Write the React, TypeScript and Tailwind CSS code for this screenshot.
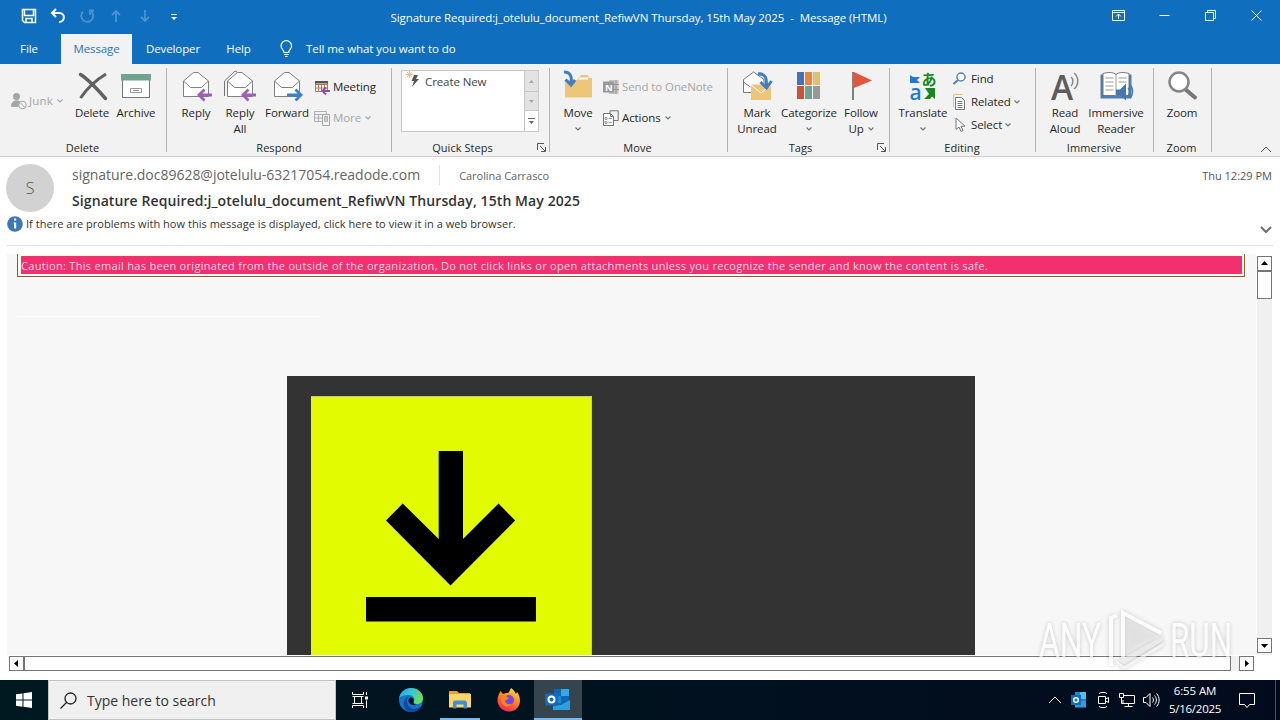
import type { ReactNode } from "react";

export default function App() {
  return (
    <div className="relative w-[1280px] h-[720px] flex flex-col overflow-hidden bg-white font-['Open_Sans',sans-serif] text-[11.5px] tracking-[-0.1px] text-[#262626] whitespace-nowrap">
      <TitleBar />
      <TabBar />
      <Ribbon />
      <MessageHeader />
      <MessageBody />
      <Taskbar />
      <Watermark />
    </div>
  );
}

function TitleBar() {
  return (
    <div className="h-[34px] shrink-0 bg-[#106ebe] text-white flex">
      <div className="w-[184px] h-8 pl-[14px] flex items-center">
        <QuickIcon>
          <path d="M1.500 1.500h13v13h-11l-2-2z M3.500 2v5.500h9V2 M5 14.500v-4h6v4" strokeWidth="1.500" />
        </QuickIcon>
        <QuickIcon>
          <path d="M6 1 2 5l4 4 M2 5h7c7 0 6 9 0 9" strokeWidth="2" />
        </QuickIcon>
        <QuickIcon dim>
          <path d="M4 3.500a6 6 0 1 0 7-1 M11 7V2.500h4" strokeWidth="1.800" />
        </QuickIcon>
        <QuickIcon dim>
          <path d="M8 14V3 M4 7l4-4 4 4" strokeWidth="1.800" />
        </QuickIcon>
        <QuickIcon dim>
          <path d="M8 2v11 M4 9l4 4 4-4" strokeWidth="1.800" />
        </QuickIcon>
        <QuickIcon>
          <path d="M5 6.500h6" strokeWidth="1" />
          <path d="M5 9h6l-3 3z" fill="white" stroke="none" />
        </QuickIcon>
      </div>
      <div className="flex-1 h-[35px] pr-[2px] flex items-center justify-center whitespace-pre tracking-[-0.07px]">
        Signature Required:j_otelulu_document_RefiwVN Thursday, 15th May 2025  -  Message (HTML)
      </div>
      <div className="flex h-[30px] pr-px">
        <WindowIcon>
          <path d="M1.500 2.500h12v10h-12z M1.500 4.500h12 M7.500 11V6.500 M5 8.500l2.500-2.500 2.500 2.500" />
        </WindowIcon>
        <WindowIcon>
          <path d="M2.500 7.500h10" />
        </WindowIcon>
        <WindowIcon>
          <path d="M2.500 4.500h8v8h-8z M4.500 4.500v-2h8v8h-2" />
        </WindowIcon>
        <WindowIcon>
          <path d="M2.500 2.500l10 10 M12.500 2.500l-10 10" />
        </WindowIcon>
      </div>
    </div>
  );
}

function QuickIcon(props: { dim?: boolean; children: ReactNode }) {
  return (
    <div className="w-[29px] shrink-0 flex justify-center">
      <svg className={props.dim ? "opacity-25" : ""} width="16" height="16" fill="none" stroke="white">
        {props.children}
      </svg>
    </div>
  );
}

function WindowIcon(props: { children: ReactNode }) {
  return (
    <div className="w-[46px] flex justify-center items-center">
      <svg width="15" height="15" fill="none" stroke="white">
        {props.children}
      </svg>
    </div>
  );
}

function TabBar() {
  return (
    <div className="h-[30px] shrink-0 bg-[#106ebe] text-white flex items-center">
      <div className="w-[61px] pr-[3px] text-center">File</div>
      <div className="w-[71px] h-full bg-[#f2f2f2] text-[#2a72b8] flex items-center justify-center">Message</div>
      <div className="w-[82px] text-center">Developer</div>
      <div className="w-[49px] text-center">Help</div>
      <svg className="ml-[15px]" width="16" height="18" fill="none" stroke="white" strokeWidth="1.2">
        <path d="M6 12.500c0-2.500-3-3.500-3-6.500a5.300 5.300 0 0 1 10.600 0c0 3-3 4-3 6.500z M6 14.500h4.600 M7 16.500h2.600" />
      </svg>
      <div className="ml-3 tracking-[-0.06px]">Tell me what you want to do</div>
    </div>
  );
}

function Ribbon() {
  return (
    <div className="h-[93px] shrink-0 bg-[#f2f2f2] border-b border-[#cfcfcf] flex">
      <Group label="Delete" className="w-[167px] pl-[10px]" labelClass="-ml-[12px]">
        <div className="w-[60px] h-[62px] flex items-center text-[#a6a6a6]">
          <svg width="18" height="18" fill="#a6a6a6">
            <circle cx="6.500" cy="4.500" r="3.500" />
            <path d="M1 15c0-8 9-8 10-4l-3 4z" />
            <circle cx="12.500" cy="13" r="3.800" fill="#f2f2f2" stroke="#a6a6a6" />
            <path d="M10 10.500l5 5" stroke="#a6a6a6" />
          </svg>
          <span className="ml-px tracking-[0.2px]">Junk</span>
          <Caret className="ml-[4px] opacity-60" />
        </div>
        <BigButton className="w-11" label="Delete">
          <path d="M4.500 4.500c8 5 18 16 25 24" stroke="#606060" strokeWidth="3.500" strokeLinecap="round" fill="none" />
          <path d="M30 4C20 10 10 20 4.500 28" stroke="#606060" strokeWidth="3" fill="none" />
        </BigButton>
        <BigButton className="w-11" label="Archive">
          <path d="M2.500 10v17.500h27V10" fill="white" stroke="#767676" />
          <path d="M1 4h30v6.500H1z" fill="#6fa390" />
          <path d="M10.500 18.500h11v4h-11z M13 20.500h6" fill="none" stroke="#999" />
        </BigButton>
      </Group>

      <Group label="Respond" className="w-[225px] pl-[7px]">
        <BigButton className="w-11" label="Reply">
          <Envelope />
          <path d="M32 25H19 M24.500 19.500 19 25l5.500 5.500" fill="none" stroke="#9b5fb5" strokeWidth="2.800" />
        </BigButton>
        <BigButton className="w-11" label={"Reply\nAll"}>
          <path d="M.5 26V11L11 1l2 1" fill="none" stroke="#767676" />
          <Envelope />
          <path d="M32 25H19 M24.500 19.500 19 25l5.500 5.500" fill="none" stroke="#9b5fb5" strokeWidth="2.800" />
        </BigButton>
        <BigButton className="w-[50px]" label="Forward">
          <Envelope />
          <path d="M16 25h14 M24.500 19.500 30 25l-5.500 5.500" fill="none" stroke="#3f7fc4" strokeWidth="2.800" />
        </BigButton>
        <div className="pt-[7px] pl-[2px] flex flex-col gap-[11px]">
          <SmallButton label="Meeting" gap="gap-[3px]">
            <path d="M1.500 2.500h12v10h-12z M1.500 5.500h12 M4.500 5.500v7 M7.500 5.500v7 M10.500 5.500v7 M1.500 9h12" fill="white" stroke="#b5764a" />
            <path d="M1 2h13v2.500H1z" fill="#555" />
            <path d="M16 12H9 M12 8.500 8.500 12l3.500 3.500" fill="none" stroke="#8f4fae" strokeWidth="2" />
          </SmallButton>
          <SmallButton label="More" gap="gap-[3px]" disabled caret>
            <path d="M.5 1.500h12v10H.5z M.5 4.500h12 M4.500 4.500v7 M.5 8h12" fill="none" stroke="#b0b0b0" />
            <path d="M8.500 4.500h7v11h-7z" fill="#f2f2f2" stroke="#a6a6a6" />
            <path d="M10.500 6.500h3v5h-3z" fill="#ccc" stroke="#b0b0b0" />
          </SmallButton>
        </div>
      </Group>

      <Group label="Quick Steps" className="w-[158px] pl-[9px]" labelClass="-ml-[26px]" launcher>
        <div className="w-[138px] h-[62px] bg-white border border-[#c8c8c8] flex">
          <div className="flex-1 pl-1 flex items-start text-[#444]">
            <svg width="16" height="18" fill="none">
              <path d="M3.500 0v7 M0 3.500h7 M1 1l5 5 M6 1 1 6" stroke="#eebf7c" />
              <path d="M8 4h4l-2 4h3l-7 8 2-6H5.500z" fill="#555" />
            </svg>
            <span className="ml-[3px] mt-[2px]">Create New</span>
          </div>
          <div className="w-[14px] border-l border-[#c8c8c8] flex flex-col">
            <div className="h-[20px] bg-[#e3e3e3] flex items-center justify-center">
              <svg width="5" height="3" fill="#a6a6a6"><path d="M0 3 2.500 0 5 3z" /></svg>
            </div>
            <div className="h-[20px] bg-[#e3e3e3] border-y border-[#c8c8c8] flex items-center justify-center">
              <svg width="5" height="3" fill="#a6a6a6"><path d="M0 0h5L2.500 3z" /></svg>
            </div>
            <div className="flex-1 flex items-center justify-center">
              <svg width="7" height="7" fill="#666"><path d="M0 0h7v1H0z M1 3h5L3.500 6z" /></svg>
            </div>
          </div>
        </div>
      </Group>

      <Group label="Move" className="w-[178px] pl-[5px]">
        <BigButton className="w-[46px]" label="Move" caret>
          <path d="M3 10h12l4-5h7l1 3h3v19.500H3z" fill="#eec67a" />
          <path d="M18 7.500h8v2H16z" fill="white" />
          <path d="M2 2c7 0 8 5 7 12 M3.500 9.500l5.500 5.500 4-5" fill="none" stroke="#3f7fc4" strokeWidth="3" />
        </BigButton>
        <div className="pt-[7px] pl-[2px] flex flex-col gap-[11px]">
          <SmallButton label="Send to OneNote" gap="gap-[3px]" disabled>
            <path d="M6 1h9.500v14H6z" fill="#c4c4c4" />
            <path d="M13 1v14 M11 5.500h5 M11 10.500h5" stroke="#999" />
            <path d="M0 2.500h11v11H0z" fill="#999" />
            <text x="2" y="11.500" fontSize="9.500" fontWeight="700" fill="white">N</text>
          </SmallButton>
          <SmallButton label="Actions" gap="gap-[3px]" caret>
            <path d="M7 3.500V.8h8.200v9.700H11" fill="none" stroke="#767676" />
            <path d="M.5 3.500h7l3 3v9h-10z M7.500 3.500v3h3" fill="white" stroke="#767676" />
            <path d="M2 7.500h2v2H2z M2 11.500h2v2H2z M5.500 8.500h3.500 M5.500 12.500h3.500" fill="none" stroke="#999" />
          </SmallButton>
        </div>
      </Group>

      <Group label="Tags" className="w-[162px] pl-[7px]" labelClass="-ml-[24px]" launcher>
        <BigButton className="w-11" label={"Mark\nUnread"}>
          <path d="M2.500 22.500V9.500L12.500 2 23 9.500v13z M2.500 12l7 5" fill="white" stroke="#767676" />
          <path d="M10 14.500h20V30H10z" fill="#eec67a" />
          <path d="M10 15l10 8 10-8" fill="none" stroke="white" />
          <path d="M17 4c7-1 9 4 8.500 12 M19.500 12l6 6 5-7" fill="none" stroke="#3f7fc4" strokeWidth="3" />
        </BigButton>
        <BigButton className="w-[60px]" label="Categorize" caret>
          <path d="M4 2h7v13H4z" fill="#4472b8" />
          <path d="M12 2h7v13h-7z" fill="#e8873c" />
          <path d="M20 2h7v13h-7z" fill="#e3bf73" />
          <path d="M4 16h7v13H4z" fill="#cf5039" />
          <path d="M12 16h7v13h-7z" fill="#6fa390" />
          <path d="M20 16h7v13h-7z" fill="#999" />
        </BigButton>
        <BigButton className="w-11" label={"Follow\nUp"} inlineCaret>
          <path d="M7 2h2v28H7z" fill="#808080" />
          <path d="M9 2l18 8.500L9 18z" fill="#e2573c" />
        </BigButton>
      </Group>

      <Group label="Editing" className="w-[146px] pl-[7px]" labelClass="-ml-[9px]">
        <BigButton className="w-[52px]" label="Translate" caret>
          <text x="14.500" y="15" fontSize="15" fontWeight="700" fill="#16881c" fontFamily="Noto Sans CJK JP">あ</text>
          <text x="2.500" y="29.500" fontSize="21" fontWeight="600" fill="#1e7ad4">a</text>
          <path d="M3 5l3 2h7l-3 3 3 3H3z" fill="#1e7ad4" />
          <path d="M18 18h10v11l-3-2.500-2 2.500H17l5-5z" fill="#16881c" />
        </BigButton>
        <div className="-mt-[1px] pl-[4px] flex flex-col gap-[3px]">
          <SmallButton label="Find" gap="gap-[2px]">
            <circle cx="8" cy="6" r="4" fill="white" stroke="#5a86b5" strokeWidth="1.500" />
            <path d="M5 9l-4.500 4" stroke="#5a86b5" strokeWidth="2.200" />
          </SmallButton>
          <SmallButton label="Related" gap="gap-[2px]" caret>
            <path d="M.5 13V.5h9" fill="none" stroke="#eebf7c" />
            <path d="M2.500 3.500h6l3 3v9h-9z M4.500 7.500h5 M4.500 9.500h5 M4.500 11.500h5 M4.500 13.500h5" fill="white" stroke="#767676" />
          </SmallButton>
          <SmallButton label="Select" gap="gap-[2px]" caret>
            <path d="M3 1v11.500l3-2.500 2 4.500 2-1-2-4.300h4z" fill="white" stroke="#767676" />
          </SmallButton>
        </div>
      </Group>

      <Group label="Immersive" className="w-[118px] pl-2" labelClass="-ml-[10px]">
        <BigButton className="w-[42px]" label={"Read\nAloud"}>
          <text x="2" y="30" fontSize="34" fontWeight="600" fill="#5c5c5c" textLength="22" lengthAdjust="spacingAndGlyphs">A</text>
          <path d="M22 7c2.500 2 2.500 6 0 9 M25 3c5 4 5 12 0 16" fill="none" stroke="#888" strokeWidth="1.500" />
        </BigButton>
        <BigButton className="w-[60px]" label={"Immersive\nReader"}>
          <path d="M.5 4.500h31v24H.5z" fill="#4a7fb5" />
          <path d="M3 3.500c5-1.500 10-1.500 13 1 3-2.500 8-2.500 13-1v22H3z" fill="white" stroke="#767676" />
          <path d="M16 5v21 M5.500 8h8 M5.500 12h8 M5.500 16h8 M5.500 20h8 M18.500 8h8 M18.500 12h8" fill="none" stroke="#999" />
          <path d="M16 19.500h4l6-6v17l-6-5.500h-4z" fill="#3f78b4" />
          <path d="M28 18c2 2 2 5 0 8 M30 15c4 4 3 10 0 13" fill="none" stroke="#3f78b4" strokeWidth="1.300" />
        </BigButton>
      </Group>

      <Group label="Zoom" className="w-[58px] pl-[5px]">
        <BigButton className="w-[46px]" label="Zoom">
          <path d="M19 19l10 8.500" stroke="#767676" strokeWidth="4" strokeLinecap="round" />
          <circle cx="13" cy="12" r="9.500" fill="white" stroke="#858585" strokeWidth="2.500" />
        </BigButton>
      </Group>

      <div className="flex-1 flex items-end justify-end pr-2 pb-[3px]">
        <svg width="12" height="7" fill="none" stroke="#555">
          <path d="M1 6l5-5 5 5" />
        </svg>
      </div>
    </div>
  );
}

function Group(props: {
  label: string;
  className: string;
  labelClass?: string;
  launcher?: boolean;
  children: ReactNode;
}) {
  const { label, className, labelClass, launcher, children } = props;
  return (
    <div className="relative flex">
      <div className={`${className} flex flex-col`}>
        <div className="h-[76px] pt-[6px] flex items-start">{children}</div>
        <div className={`h-4 leading-4 text-[11px] tracking-[0.05px] text-center ${labelClass ?? "-ml-[8px]"}`}>{label}</div>
      </div>
      {launcher && (
        <svg className="absolute right-[4px] bottom-1" width="9" height="9" fill="none" stroke="#555">
          <path d="M.5 7V.5H7 M3 3l5 5 M8.500 4v4.500H4" />
        </svg>
      )}
      <div className="absolute right-0 top-1 w-px h-[84px] bg-[#b3b3b3]" />
    </div>
  );
}

function BigButton(props: {
  label: string;
  className: string;
  caret?: boolean;
  inlineCaret?: boolean;
  children: ReactNode;
}) {
  const { label, className, caret, inlineCaret, children } = props;
  const lines = label.split("\n");
  return (
    <div className={`${className} flex flex-col items-center leading-4`}>
      <svg className="mb-[3px] overflow-visible" width="32" height="32">
        {children}
      </svg>
      {lines.map((line, i) => (
        <div key={line} className="flex items-center">
          {line}
          {inlineCaret && i === lines.length - 1 && <Caret className="ml-1" />}
        </div>
      ))}
      {caret && <Caret className="mt-[6px]" />}
    </div>
  );
}

function SmallButton(props: {
  label: string;
  gap: string;
  disabled?: boolean;
  caret?: boolean;
  children: ReactNode;
}) {
  const { label, gap, disabled, caret, children } = props;
  return (
    <div className={`h-5 flex items-center ${gap} ${disabled ? "text-[#a6a6a6]" : ""}`}>
      <svg width="16" height="16">{children}</svg>
      {label}
      {caret && <Caret className={disabled ? "ml-px opacity-60" : "ml-px"} />}
    </div>
  );
}

function Caret(props: { className: string }) {
  return (
    <svg className={props.className} width="6" height="4" fill="none" stroke="#767676" strokeWidth="1.200">
      <path d="M.5 .5 3 3 5.500 .5" />
    </svg>
  );
}

function Envelope() {
  return (
    <g fill="white" stroke="#808080">
      <path d="M3.500 26.500V11L13.500 2.500h4.500L28.500 11v15.500z" />
      <path d="M3.500 11l7 6.500h11l7-6.500" fill="none" />
    </g>
  );
}

function MessageHeader() {
  return (
    <div className="h-[89px] shrink-0 mx-[7px] border-b border-[#e1e1e1] flex flex-col tracking-normal">
      <div className="h-[57px] flex">
        <div className="-ml-px mt-[7px] size-12 rounded-full bg-[#d2d2d2] text-[#555] text-base font-light flex items-center justify-center">
          S
        </div>
        <div className="ml-[18px] mt-2">
          <div className="h-5 flex items-center text-[14px] text-[#666]">
            <span className="-mt-[2px] tracking-[-0.02px]">signature.doc89628@jotelulu-63217054.readode.com</span>
            <span className="ml-[19px] w-px h-5 bg-[#e1e1e1]" />
            <span className="ml-[19px] mt-[2px] text-[11px] tracking-[-0.04px]">Carolina Carrasco</span>
          </div>
          <div className="mt-[6px] h-5 leading-5 text-[14px] font-semibold tracking-[0.095px] text-[#333]">
            Signature Required:j_otelulu_document_RefiwVN Thursday, 15th May 2025
          </div>
        </div>
        <div className="ml-auto mt-[9px] pr-px h-5 leading-5 text-[11px] text-[#555]">Thu 12:29 PM</div>
      </div>
      <div className="h-5 flex items-center text-[11px] text-[#333]">
        <svg width="16" height="16">
          <circle cx="8" cy="8" r="7.800" fill="#3b78b5" />
          <path d="M7 2.500h2.200v2H7z M6.500 6.500h2.700v6H7V7.500h-.5z" fill="white" />
        </svg>
        <span className="ml-[3px] tracking-[0.03px]">
          If there are problems with how this message is displayed, click here to view it in a web browser.
        </span>
        <svg className="ml-auto mt-[11px] mr-[1px]" width="12" height="8" fill="none" stroke="#6e6e6e" strokeWidth="2">
          <path d="M1 1l5 5 5-5" />
        </svg>
      </div>
    </div>
  );
}

function MessageBody() {
  return (
    <div className="flex-1 pt-2 flex flex-col">
      <div className="h-[401px] pl-[7px] flex">
        <div className="w-[1249px] bg-[#f7f7f7]">
          <div className="ml-[10px] w-[1228px] h-[23px] border border-t-0 border-[#8a5a35] bg-[#fffaf0] pt-[2px] pl-[3px] pr-[2px]">
            <div className="h-[18px] leading-[19px] bg-[#f22f6f] text-[#ffd9e8] text-[11px] tracking-[0.304px]">
              Caution: This email has been originated from the outside of the organization, Do not click links or open attachments unless you recognize the sender and know the content is safe.
            </div>
          </div>
          <div className="ml-[10px] mt-[39px] w-[303px] h-px bg-[#fdfdfd]" />
          <div className="ml-[280px] mt-[59px] w-[688px] h-[279px] bg-[#333333] pt-5 pl-6">
            <svg width="281" height="259">
              <path d="M0 0h281v259H0z" fill="#c3c98a" />
              <path d="M0 1h280v258H0z" fill="#e2fb00" />
              <path d="M127.700 55h24.300v88l35.500-35.500 16.700 17L139.500 189.500 75 124.500l16.700-17 36 35.500z" />
              <path d="M55 201h170v24.500H55z" />
            </svg>
          </div>
        </div>
        <div className="ml-px mt-[2px] w-[15px] bg-[#f0f0f0] flex flex-col">
          <ScrollButton d="M3 8h7L6.500 4z" />
          <div className="h-[28px] border border-[#767676] bg-white" />
          <div className="flex-1" />
          <div className="mb-[2px]">
            <ScrollButton d="M3 5h7L6.500 9z" />
          </div>
        </div>
      </div>
      <div className="mt-px h-[15px] pl-[9px] flex">
        <ScrollButton d="M8 3v7L4 6.500z" />
        <div className="w-[1207px] border border-[#767676] bg-white" />
        <div className="w-2 bg-[#f0f0f0]" />
        <ScrollButton d="M5 3v7l4-3.500z" />
      </div>
    </div>
  );
}

function ScrollButton(props: { d: string }) {
  return (
    <div className="size-[15px] border border-[#767676] bg-white">
      <svg width="13" height="13">
        <path d={props.d} />
      </svg>
    </div>
  );
}

function Taskbar() {
  return (
    <div className="h-10 shrink-0 bg-linear-to-r from-[#001820] to-[#020b1d] text-white flex">
      <div className="w-12 flex items-center justify-center">
        <svg width="16" height="16" fill="white">
          <path d="M0 2.300 6.500 1.400v6.200H0z M7.500 1.200 16 0v7.600H7.500z M0 8.500h6.500v6.200L0 13.800z M7.500 8.500H16V16l-8.500-1.200z" />
        </svg>
      </div>
      <div className="w-72 bg-[#f0f0f0] border border-[#c4c4c4] pl-[11px] flex items-center text-[#333] text-[14px] tracking-normal">
        <svg width="17" height="17" fill="none" stroke="#222" strokeWidth="1.300">
          <circle cx="10.500" cy="6.500" r="5.500" />
          <path d="M6.500 10.500.5 16.500" />
        </svg>
        <span className="ml-[10px]">Type here to search</span>
      </div>
      <div className="w-12 flex items-center justify-center">
        <svg width="17" height="16" fill="none" stroke="white">
          <path d="M.5 0v2.500h11V0 M2.500 4.500h7v7h-7z M.5 4.500h11 M.5 11.500h11 M.5 16v-2.500h11V16 M14.500 0v3 M14.500 8.500V16" />
          <path d="M13 4.500h3v3h-3z" fill="white" stroke="none" />
        </svg>
      </div>
      <div className="ml-[3px] w-12 flex items-center justify-center">
        <svg width="24" height="24" viewBox="0 0 24 24">
          <defs>
            <linearGradient id="edgeTop" x1="0" y1="0" x2="1" y2="0.400">
              <stop offset="0" stopColor="#2aa5e0" />
              <stop offset="0.500" stopColor="#33c4d8" />
              <stop offset="1" stopColor="#6bdc5a" />
            </linearGradient>
          </defs>
          <circle cx="12" cy="12" r="12" fill="#1773cf" />
          <path d="M0 11C1 4 6 0 12 0c7 0 12 5 12 10 0 4-3 6-6 6-3 0-4-1-3-3 1-3-1-6-5-6-5 0-9 1-10 4z" fill="url(#edgeTop)" />
          <path d="M10 8c-3 2-3 9 2 12 4 2 8 0 10-2-2 4-6 6-10 6C7 24 4 19 5 14c.5-3 2-5 5-6z" fill="#114a9c" />
          <path d="M11 9.500c3 0 4.500 2 3.500 4-.5 1.500.5 3 3 3.300-4 1.500-8-1-8-4 0-1.500.5-2.500 1.500-3.300z" fill="#001620" />
        </svg>
      </div>
      <div className="ml-px w-12 pt-[2px] flex flex-col items-center justify-between">
        <svg className="mt-2" width="22" height="19">
          <path d="M0 1h8l2 2h11v4H0z" fill="#e0a33a" />
          <path d="M0 4h22v13.500H0z" fill="#fcd667" />
          <path d="M4 18.500V12l1.500-1.500h11L18 12v6.500h-3.500v-4h-7v4z" fill="#3f8fd2" />
        </svg>
        <div className="w-10 h-[2px] bg-[#76b9ed]" />
      </div>
      <div className="ml-px w-12 flex items-center justify-center">
        <svg width="24" height="24" viewBox="0 0 24 24">
          <defs>
            <linearGradient id="foxBody" x1="0.800" y1="0" x2="0.300" y2="1">
              <stop offset="0" stopColor="#ffe545" />
              <stop offset="0.450" stopColor="#ff8a1f" />
              <stop offset="1" stopColor="#f5205e" />
            </linearGradient>
          </defs>
          <path d="M2 6l1.500-3L6 6l3-1c1.500 0 2.500 0 3-1l2-4c3 2 4 4 5 6l1-2c3 4 3.500 8 2.500 12-1.500 5-6 7.500-10.500 7.500C5 23.500.5 18 .5 12.500.5 10 1 8 2 6z" fill="url(#foxBody)" />
          <circle cx="12" cy="12" r="5" fill="#7a45dd" />
          <path d="M5 8c2-1 4 0 6 1.500 1.500 1-1 2.500-3 3 0 3 4 5 7 3-2 4-9 4-10.500-1C4 12 4 10 5 8z" fill="#ff8020" />
        </svg>
      </div>
      <div className="ml-px w-12 bg-[#36454d] flex flex-col items-center justify-between">
        <svg className="mt-2" width="26" height="24">
          <path d="M9 1h15v16H9z" fill="#1066b5" />
          <path d="M16 1h8v7h-8z" fill="#32a8e8" />
          <path d="M9 8h7v7H9z" fill="#1a86d6" />
          <path d="M8 18l8-1 9-5v10H8z" fill="#2ba0e0" />
          <path d="M0 5.500h13v12H0z" fill="#0f6cbd" />
          <circle cx="6.500" cy="11.500" r="3" fill="none" stroke="white" strokeWidth="2" />
        </svg>
        <div className="w-12 h-[2px] bg-[#76b9ed]" />
      </div>

      <div className="ml-auto flex items-center">
        <TrayIcon>
          <path d="M3 12l6-6 6 6" />
        </TrayIcon>
        <TrayIcon>
          <path d="M5 1h11v14H5z" fill="#1a86d6" stroke="none" />
          <path d="M10 1h6v7h-6z" fill="#4cc0f0" stroke="none" />
          <path d="M5 10h11v6.500H5z" fill="#2ba0e0" stroke="none" />
          <path d="M1 4h10v10H1z" fill="#0f6cbd" stroke="none" />
          <circle cx="6" cy="9" r="2.300" strokeWidth="1.500" />
        </TrayIcon>
        <TrayIcon>
          <path d="M4.500 5.500h7v7h-7z M11.500 8l3-1.500v5l-3-1.500 M5 2.500c2-1.500 6-1.500 8 0 M5 15.500c2 1.500 6 1.500 8 0" />
        </TrayIcon>
        <TrayIcon>
          <path d="M6 4.500h10.500v8H5V9 M10.500 12.500v3 M6.500 15.500h8 M1.500 2.500h4v4h-4z M3.500 6.500v6H5" />
        </TrayIcon>
        <TrayIcon>
          <path d="M1.500 6.500h2.500l4-4v13l-4-4H1.500z M10.500 6.500c1.300 1.500 1.300 3.500 0 5 M12.500 4.500c2.500 2.500 2.500 6.500 0 9 M14.500 2.500c3.500 3.500 3.500 9.500 0 13" />
        </TrayIcon>
        <div className="w-16 text-center leading-[18px]">
          <div>6:55 AM</div>
          <div className="tracking-[-0.25px]">5/16/2025</div>
        </div>
        <div className="w-10 flex justify-center">
          <svg width="18" height="18" fill="none" stroke="white">
            <path d="M1.500 2.500h15v11h-5L9 16.500l-2.500-3h-5z" />
          </svg>
        </div>
        <div className="ml-2 mr-1 w-px h-10 bg-[#47505c]" />
      </div>
    </div>
  );
}

function TrayIcon(props: { children: ReactNode }) {
  return (
    <div className="w-6 flex justify-center">
      <svg width="18" height="18" fill="none" stroke="white">
        {props.children}
      </svg>
    </div>
  );
}

function Watermark() {
  return (
    <svg
      className="absolute left-[1032px] top-[604px] drop-shadow-[0_0_2px_rgba(0,0,0,0.28)] opacity-70"
      width="214"
      height="72"
      fill="white"
      fontFamily="Roboto"
      fontSize="49"
    >
      <text x="7" y="53" textLength="62" lengthAdjust="spacingAndGlyphs">ANY</text>
      <text x="138" y="53" textLength="62" lengthAdjust="spacingAndGlyphs">RUN</text>
      <path d="M79 62V14l6-3" fill="none" stroke="white" strokeWidth="4" />
      <path d="M91 54V9l38 20" fill="none" stroke="white" strokeWidth="4" />
      <path d="M94 14l32 18-32 18z" fill="#dedede" fillOpacity="0.500" />
      <path d="M91 54l40-22v5L92 60l-8-4" fill="#e4e4e4" />
      <path d="M84 58l8 6 40-24" fill="none" stroke="#f0f0f0" strokeWidth="3" />
    </svg>
  );
}
